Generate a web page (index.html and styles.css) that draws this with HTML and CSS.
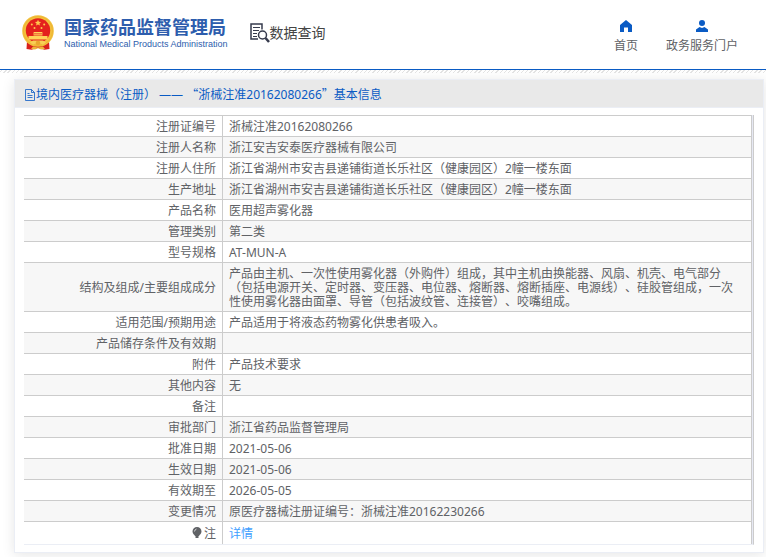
FILE: index.html
```html
<!DOCTYPE html>
<html lang="zh-CN">
<head>
<meta charset="utf-8">
<title>国家药品监督管理局 数据查询</title>
<link rel="stylesheet" href="styles.css">
</head>
<body>
<header class="site-header">
  <div class="brand">
    <svg class="emblem" viewBox="0 0 32 35" aria-hidden="true">
      <path d="M5 26h22l.5 8-5 .8-6.500-2-6.500 2-5-.8z" fill="#d9201c"/>
      <circle cx="16" cy="16" r="15.800" fill="#f3c13c"/>
      <circle cx="16" cy="16" r="14.600" fill="none" stroke="#e8ac30" stroke-width=".6"/>
      <circle cx="16" cy="15.500" r="12.200" fill="#e4211d"/>
      <path d="M16 4.800l.9 2 2.200.2-1.700 1.400.6 2.200-2-1.200-2 1.200.6-2.200-1.700-1.400 2.200-.2z" fill="#ffc84d"/>
      <g fill="#ffc84d"><circle cx="9.800" cy="9.500" r="1"/><circle cx="22.200" cy="9.500" r="1"/><circle cx="12.500" cy="13" r="1"/><circle cx="19.500" cy="13" r="1"/></g>
      <path d="M11 18.500l1-1.500h8l1 1.500zM11.500 19.200h9v1.300h-9zM6.500 21h19v3.500h-19z" fill="#ffd45a"/>
      <path d="M8 27.500l3-2h10l3 2-3 2.300-2.500-1.300-2.500 1.700-2.500-1.700-2.500 1.300z" fill="#f8cf55"/>
      <circle cx="16" cy="28" r="2.300" fill="#e9a72e"/>
      <path d="M9 34l2-2.500 5 1 5-1 2 2.500-4 .6-3-1.300-3 1.300z" fill="#edb43a"/>
    </svg>
    <div class="brand-text">
      <span class="brand-cn">国家药品监督管理局</span>
      <span class="brand-en">National Medical Products Administration</span>
    </div>
  </div>
  <div class="section">
    <svg class="section-icon" viewBox="0 0 20 20" fill="none" stroke="#363b4d" aria-hidden="true">
      <path d="M8 16H1V1h11v5.500" stroke-width="1.500"/>
      <path d="M3 4.500h7M3 7.500h6M3 10.500h4M3 13.500h4" stroke-width="1"/>
      <circle cx="12.500" cy="12" r="4" stroke-width="1.500"/>
      <path d="M15.500 15l3.500 4" stroke-width="2.500"/>
    </svg>
    <span>数据查询</span>
  </div>
  <nav class="nav">
    <a href="#home">
      <svg viewBox="0 0 12 12" aria-hidden="true"><path d="M6 0l6 5v7H8V7.500H4V12H0V5z" fill="#0a5bc4"/></svg>
      <span>首页</span>
    </a>
    <a href="#portal">
      <svg viewBox="0 0 12 12" aria-hidden="true"><circle cx="6" cy="3" r="3" fill="#0a5bc4"/><path d="M0 12V9.500L3.500 7 6 8l2.500-1L12 9.500V12z" fill="#0a5bc4"/></svg>
      <span>政务服务门户</span>
    </a>
  </nav>
</header>
<div class="hatch"></div>
<main class="panel">
  <h1 class="panel-title">
    <svg viewBox="0 0 12 12" fill="none" stroke="#0a5bc4" aria-hidden="true"><path d="M1.500.5h6l3 3v8h-9zM7.500.5v3h3M3.500 4.500h2M3.500 6.500h5M3.500 8.500h5" stroke-width=".8"/></svg>
    <span>境内医疗器械（注册） —— <span class="quote">“</span>浙械注准20162080266<span class="quote">”</span>基本信息</span>
  </h1>
  <div class="panel-body">
    <table class="info">
      <tbody>
        <tr><th scope="row">注册证编号</th><td>浙械注准20162080266</td></tr>
        <tr><th scope="row">注册人名称</th><td>浙江安吉安泰医疗器械有限公司</td></tr>
        <tr><th scope="row">注册人住所</th><td>浙江省湖州市安吉县递铺街道长乐社区（健康园区）2幢一楼东面</td></tr>
        <tr><th scope="row">生产地址</th><td>浙江省湖州市安吉县递铺街道长乐社区（健康园区）2幢一楼东面</td></tr>
        <tr><th scope="row">产品名称</th><td>医用超声雾化器</td></tr>
        <tr><th scope="row">管理类别</th><td>第二类</td></tr>
        <tr><th scope="row">型号规格</th><td>AT-MUN-A</td></tr>
        <tr><th scope="row">结构及组成/主要组成成分</th><td>产品由主机、一次性使用雾化器（外购件）组成，其中主机由换能器、风扇、机壳、电气部分（包括电源开关、定时器、变压器、电位器、熔断器、熔断插座、电源线）、硅胶管组成，一次性使用雾化器由面罩、导管（包括波纹管、连接管）、咬嘴组成。</td></tr>
        <tr><th scope="row">适用范围/预期用途</th><td>产品适用于将液态药物雾化供患者吸入。</td></tr>
        <tr><th scope="row">产品储存条件及有效期</th><td></td></tr>
        <tr><th scope="row">附件</th><td>产品技术要求</td></tr>
        <tr><th scope="row">其他内容</th><td>无</td></tr>
        <tr><th scope="row">备注</th><td></td></tr>
        <tr><th scope="row">审批部门</th><td>浙江省药品监督管理局</td></tr>
        <tr><th scope="row">批准日期</th><td>2021-05-06</td></tr>
        <tr><th scope="row">生效日期</th><td>2021-05-06</td></tr>
        <tr><th scope="row">有效期至</th><td>2026-05-05</td></tr>
        <tr><th scope="row">变更情况</th><td>原医疗器械注册证编号：浙械注准20162230266</td></tr>
        <tr class="note"><th scope="row"><svg class="bulb" viewBox="0 0 10 12" aria-hidden="true"><path d="M5 0a4.500 4.500 0 0 1 4.500 4.500C9.500 7 7.500 7.500 7 9H3C2.500 7.500.5 7 .5 4.500A4.500 4.500 0 0 1 5 0zM3.500 9h3v2h-3z" fill="#606266"/><path d="M2.500 4.500Q2.700 2.500 4.500 2" fill="none" stroke="#fff" stroke-width=".7"/></svg>注</th><td><a href="#detail">详情</a></td></tr>
      </tbody>
    </table>
  </div>
</main>
</body>
</html>
```
FILE: styles.css
```css
* {
  box-sizing: border-box;
}

body {
  margin: 0;
  background: #fff;
  color: #606266;
  font-family: "Noto Sans", "Noto Sans CJK SC", sans-serif;
  font-size: 12px;
  line-height: 14px;
  text-spacing-trim: space-all;
}

a {
  text-decoration: none;
}

.site-header {
  display: flex;
  align-items: center;
  height: 70px;
  padding: 0 28px 0 22px;
  border-bottom: 1px solid #0a5bc4;
}

.brand {
  display: flex;
  align-items: center;
  gap: 10px;
  padding-bottom: 4px;
}

.emblem {
  width: 32px;
  height: 35px;
}

.brand-text {
  display: flex;
  flex-direction: column;
  color: #2d5dad;
  white-space: nowrap;
}

.brand-cn {
  font-family: "Noto Sans CJK SC", sans-serif;
  font-size: 18px;
  font-weight: 700;
  line-height: 22px;
}

.brand-en {
  font-family: "Liberation Sans", Arial, sans-serif;
  font-size: 9px;
  line-height: 14px;
}

.section {
  display: flex;
  align-items: center;
  margin-left: 22px;
  padding-bottom: 3px;
  color: #444;
  font-size: 14px;
  line-height: 20px;
}

.section-icon {
  width: 20px;
  height: 20px;
}

.nav {
  display: flex;
  gap: 28px;
  margin-left: auto;
  padding-top: 5px;
}

.nav a {
  display: flex;
  flex-direction: column;
  align-items: center;
  gap: 6px;
  color: #606266;
  line-height: 16px;
}

.nav svg {
  width: 12px;
  height: 12px;
}

.hatch {
  height: 3px;
  background: repeating-linear-gradient(135deg, #fff 0 1px, #e4e4e4 1px 2px, #fff 2px 3px);
}

.panel {
  margin: 6px 2px 4px 14px;
  border: 1px solid #ebeef5;
  background: #fff;
  box-shadow: 0 2px 12px rgba(0, 0, 0, 0.1);
}

.panel-title {
  display: flex;
  align-items: center;
  margin: 0;
  padding: 6px 9px 4px;
  border-bottom: 1px solid #ebeef5;
  background: #e9e9e9;
  color: #0a5bc4;
  font-size: 12px;
  font-weight: 400;
  line-height: 16px;
}

.panel-title svg {
  width: 12px;
  height: 12px;
}

.quote {
  font-family: "Noto Sans CJK SC", sans-serif;
}

.panel-body {
  padding: 7px 9px;
}

.info {
  width: 100%;
  padding-right: 1px;
  border-right: 1px solid #ccc;
  border-bottom: 1px solid #ebeef5;
  border-spacing: 0;
  background: #e6e8f3;
}

.info th,
.info td {
  height: 21px;
  padding: 4px 6px 2px;
  border-top: 1px solid #ccc;
  border-right: 1px solid #ccc;
  background: #fff;
  font-weight: 400;
}

.info th {
  width: 199px;
  text-align: right;
}

.info td {
  padding-right: 10px;
}

.info tr:nth-child(even) > * {
  background: #f7f7f7;
}

.info .note > * {
  height: 23px;
}

.info a {
  color: #409eff;
}

.bulb {
  width: 10px;
  height: 12px;
  margin-right: 2px;
  vertical-align: -1px;
}
```
